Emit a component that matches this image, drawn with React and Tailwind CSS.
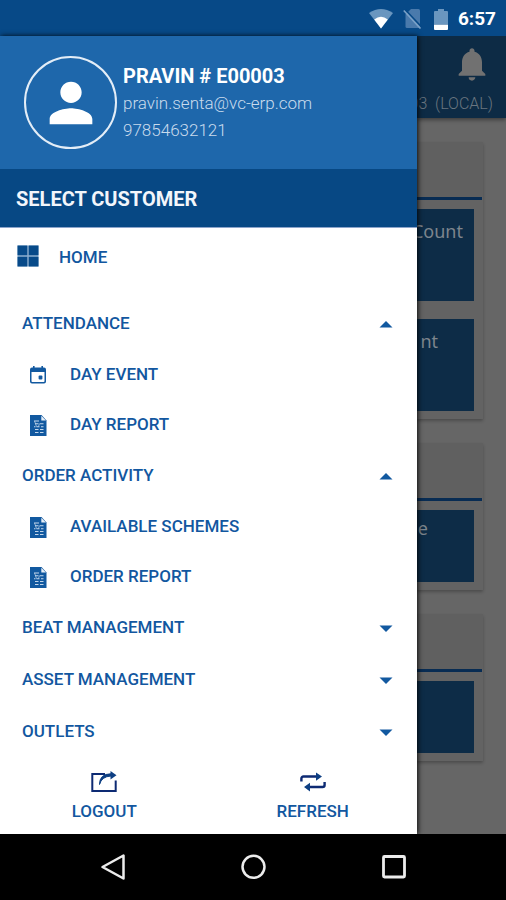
import { useState } from 'react'
import { MdNotifications, MdPerson } from 'react-icons/md'

const GROUPS = [
  {
    title: 'ATTENDANCE',
    items: [
      { label: 'DAY EVENT', icon: EventIcon },
      { label: 'DAY REPORT', icon: ReportIcon },
    ],
  },
  {
    title: 'ORDER ACTIVITY',
    items: [
      { label: 'AVAILABLE SCHEMES', icon: ReportIcon },
      { label: 'ORDER REPORT', icon: ReportIcon },
    ],
  },
  { title: 'BEAT MANAGEMENT', items: [] },
  { title: 'ASSET MANAGEMENT', items: [] },
  { title: 'OUTLETS', items: [] },
]

function HomeIcon() {
  return (
    <svg viewBox="0 0 22 22" className="size-[22px]" aria-hidden="true">
      <path d="M.5 .5h21v21H.5z" fill="#8fb0d0" />
      <path d="M.5 .5h9.800v9.800H.5zM11.700 .5h9.800v9.800h-9.800zM.5 11.700h9.800v9.800H.5zM11.700 11.700h9.800v9.800h-9.800z" fill="#074a89" />
    </svg>
  )
}

function EventIcon() {
  return (
    <svg viewBox="0 0 16 18" className="h-[18px] w-4" fill="#1259a0" aria-hidden="true">
      <path
        fillRule="evenodd"
        d="M3 0h1.600v1.600h6.800V0H13v1.600h1a2 2 0 0 1 2 2V15.500a2 2 0 0 1-2 2H2a2 2 0 0 1-2-2V3.600a2 2 0 0 1 2-2h1zM1.500 6v9.200a.8.8 0 0 0 .8.8h11.400a.8.8 0 0 0 .8-.8V6z"
      />
      <rect x="8.600" y="9.600" width="3.800" height="3.800" rx="1" />
    </svg>
  )
}

function ReportIcon() {
  return (
    <svg viewBox="0 0 17 21" className="h-[21px] w-[17px]" aria-hidden="true">
      <path d="M0 0h11.500l5 5.500V21H0z" fill="#1259a0" />
      <path d="M11.300 .8v4.700h4.700z" fill="#e6eff8" />
      <g stroke="#c3d7eb" strokeWidth="1.100" fill="none">
        <path d="M4 6h5M5 8.700h3.500M10 8.700h3.500M4 11.700h1.500M6.500 11.700h3M11 11.700h2.500M5 14.500h3.500M10 14.500h3.500M5 17.500h3.500M10 17.500h3.500" />
        <path d="M4.500 6l2 5.500M9.500 8.500l-1 3" strokeWidth=".7" />
      </g>
    </svg>
  )
}

function LogoutIcon() {
  return (
    <svg viewBox="0 0 26 22" className="h-[22px] w-[26px]" fill="none" aria-hidden="true">
      <path d="M14 3H1.300v17h23.400V9.500" stroke="#0d2a73" strokeWidth="2" />
      <path d="M8.500 13.500Q10.500 5.500 20 5V2.800Q8.500 2.800 8.500 13.500z" fill="#0d3f83" stroke="#0d3f83" strokeWidth="1" />
      <path d="M19.500 0l6 4.200-6 4.300z" fill="#0d3f83" />
    </svg>
  )
}

function RefreshIcon() {
  return (
    <svg viewBox="0 0 26 20" className="h-5 w-[26px]" fill="none" aria-hidden="true">
      <path d="M1.400 9.500V6.500a2 2 0 0 1 2-2H17M24.600 10v3a2 2 0 0 1-2 2H9" stroke="#0d2a73" strokeWidth="2.400" />
      <path d="M16 .5l6 4-6 4.200zM10 10.800l-6 4.200 6 4.500z" fill="#0d3f83" />
    </svg>
  )
}

function StatusBar() {
  return (
    <header className="flex h-9 items-center justify-end bg-[#074987] pt-0.5 pr-2.5">
      <svg viewBox="0 0 24 20" className="mr-2.5 h-5 w-6" aria-hidden="true">
        <path d="M0 4Q12-4 24 4L12 19.500z" fill="#6a96bf" />
        <path d="M5.200 10.500Q12 4.800 18.800 10.500L12 19.500z" fill="#fff" />
      </svg>
      <svg viewBox="0 0 19 20" className="mr-3 h-5 w-[19px]" aria-hidden="true">
        <path d="M8 0h7.500a1.500 1.500 0 0 1 1.500 1.500v16a1.500 1.500 0 0 1-1.500 1.500H4a1.500 1.500 0 0 1-1.500-1.500V5.500z" fill="#4a7aac" />
        <path d="M1.500 0L18.500 18" stroke="#074987" strokeWidth="1.600" />
        <path d="M.8 1.500L17.500 19.500" stroke="#7ba2c8" strokeWidth="1.600" />
      </svg>
      <svg viewBox="0 0 14 21" className="mr-2.5 h-[21px] w-3.5" aria-hidden="true">
        <path d="M4 0h6v2h3a1 1 0 0 1 1 1v12H0V3a1 1 0 0 1 1-1h3z" fill="#6a96bf" />
        <path d="M0 15.500h14V20a1 1 0 0 1-1 1H1a1 1 0 0 1-1-1z" fill="#fff" />
      </svg>
      <time className="text-[19px] font-bold text-white">6:57</time>
    </header>
  )
}

function MenuGroup({ group, open, onToggle }) {
  return (
    <section>
      <button
        onClick={onToggle}
        aria-expanded={open}
        className="flex h-[52px] w-full items-center justify-between pr-6 pl-[22px] font-medium"
      >
        {group.title}
        <svg viewBox="0 0 14 7" className="h-[7px] w-3.5" fill="#1259a0" aria-hidden="true">
          <path d={open ? 'M.5 6.500L7 0l6.500 6.500z' : 'M.5 .5L7 7l6.500-6.500z'} />
        </svg>
      </button>
      {open && group.items.map(({ label, icon: Icon }) => (
        <a key={label} href="#" className="flex h-[50px] items-center pl-[30px] font-medium">
          <span className="flex w-10 shrink-0">
            <Icon />
          </span>
          {label}
        </a>
      ))}
    </section>
  )
}

function Drawer() {
  const [opened, setOpened] = useState(['ATTENDANCE', 'ORDER ACTIVITY'])

  const toggle = (title) => {
    setOpened(opened.includes(title) ? opened.filter(t => t !== title) : [...opened, title])
  }

  return (
    <aside className="z-10 flex w-[82.4%] shrink-0 flex-col bg-white text-[17px] text-[#1257a0] shadow-[1px_0_5px_rgba(0,0,0,0.9)]">
      {/* profile */}
      <div className="flex h-[133px] items-center bg-[#1e67ab] pl-6 text-[#c9dbed]">
        <div className="mr-1.5 flex size-[93px] shrink-0 items-center justify-center rounded-full border-2 border-[#e3edf7]">
          <MdPerson className="size-16 text-white" />
        </div>
        <div>
          <h1 className="text-xl leading-7 font-bold text-white">PRAVIN # E00003</h1>
          <p className="text-[17px] leading-[27px] font-light">pravin.senta@vc-erp.com</p>
          <p className="text-[17px] leading-[27px] font-light">97854632121</p>
        </div>
      </div>
      <button className="h-[59px] border-b border-[#8ca4cb] bg-[#074884] pt-0.5 pl-4 text-left text-xl font-bold text-[#f3f6fb]">
        SELECT CUSTOMER
      </button>

      {/* menu */}
      <nav className="flex-1">
        <a href="#" className="mb-2.5 flex h-[60px] items-center pl-[17px] font-medium">
          <span className="flex w-[42px] shrink-0 pb-1">
            <HomeIcon />
          </span>
          HOME
        </a>
        {GROUPS.map(group => (
          <MenuGroup
            key={group.title}
            group={group}
            open={opened.includes(group.title)}
            onToggle={() => toggle(group.title)}
          />
        ))}
      </nav>

      {/* bottom actions */}
      <div className="grid h-[76px] grid-cols-2 font-medium">
        <button className="flex flex-col items-center pt-3">
          <span className="flex h-6 items-center"><LogoutIcon /></span>
          <span className="mt-1 leading-[26px]">LOGOUT</span>
        </button>
        <button className="flex flex-col items-center pt-3">
          <span className="flex h-6 items-center"><RefreshIcon /></span>
          <span className="mt-1 leading-[26px]">REFRESH</span>
        </button>
      </div>
    </aside>
  )
}

function Card({ children }) {
  return (
    <section className="bg-[#636363] shadow-[0_2px_3px_rgba(0,0,0,0.25)]">
      <div className="h-[55px] bg-[#606060]" />
      <div className="mr-px h-[3px] bg-[#082c53]" />
      <div className="flex flex-col gap-[18px] pt-[9px] pr-[9px] pb-2">{children}</div>
    </section>
  )
}

function Dashboard() {
  return (
    <main className="min-w-0 flex-1 overflow-hidden bg-[#666666] text-[#7d858d]">
      <div className="flex h-[82px] flex-col items-end bg-[#0d2b45] pt-2 text-[#6a7680] shadow-[0_2px_4px_rgba(0,0,0,0.4)]">
        <button aria-label="Notifications" className="pr-3.5">
          <MdNotifications className="size-10 text-[#717171]" />
        </button>
        <p className="mt-2 pr-[13px] text-base font-light whitespace-pre">03  (LOCAL)</p>
      </div>
      <div className="flex flex-col gap-6 pt-6 pr-[23px] font-['Noto_Sans',sans-serif] text-lg">
        <Card>
          <div className="flex h-[92px] justify-end bg-[#0d2c47] pt-2 pr-[11px]">Count</div>
          <div className="flex h-[92px] justify-end bg-[#0d2c47] pt-2 pr-9">nt</div>
        </Card>
        <Card>
          <div className="flex h-[72px] justify-end bg-[#0d2c47] pt-1 pr-[46px]">e</div>
        </Card>
        <Card>
          <div className="h-[72px] bg-[#0d2c47]" />
        </Card>
      </div>
    </main>
  )
}

function SystemNav() {
  return (
    <footer className="flex h-[66px] items-center justify-center gap-28 bg-black">
      <button aria-label="Back">
        <svg viewBox="0 0 28 28" className="size-7" fill="none" stroke="#ececec" strokeWidth="2.500">
          <path d="M24.500 2.500v23L3.500 14z" strokeLinejoin="round" />
        </svg>
      </button>
      <button aria-label="Home">
        <svg viewBox="0 0 28 28" className="size-7" fill="none" stroke="#ececec" strokeWidth="2.500">
          <circle cx="14.500" cy="13.800" r="11" />
        </svg>
      </button>
      <button aria-label="Recent apps">
        <svg viewBox="0 0 28 28" className="size-7" fill="none" stroke="#ececec" strokeWidth="2.800">
          <rect x="4.500" y="3.500" width="21" height="20.500" rx="1" />
        </svg>
      </button>
    </footer>
  )
}

export default function App() {
  return (
    <div className="flex min-h-screen flex-col font-['Roboto',sans-serif]">
      <StatusBar />
      <div className="flex flex-1">
        <Drawer />
        <Dashboard />
      </div>
      <SystemNav />
    </div>
  )
}
